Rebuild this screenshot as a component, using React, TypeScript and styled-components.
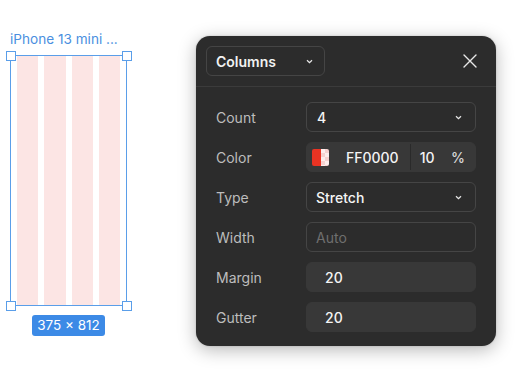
import React from "react";
import styled, { createGlobalStyle } from "styled-components";

const Global = createGlobalStyle`
  html, body { margin: 0; padding: 0; background: #ffffff; }
  body { font-family: Inter, "Noto Sans", sans-serif; -webkit-font-smoothing: antialiased; }
  * { box-sizing: border-box; }
`;

const Page = styled.div`
  width: 515px;
  height: 386px;
  display: flex;
  align-items: flex-start;
  overflow: hidden;
`;

const Canvas = styled.div`
  display: flex;
  flex-direction: column;
  align-items: flex-start;
  padding: 30px 0 0 10px;
  width: 196px;
  flex-shrink: 0;
`;

const FrameLabel = styled.div`
  font-size: 13.6px;
  color: #4a8fe0;
  line-height: 18px;
  margin-bottom: 7px;
  white-space: nowrap;
`;

const Frame = styled.div`
  position: relative;
  width: 117px;
  height: 251px;
  border: 1.5px solid #5a9ee9;
  display: flex;
  justify-content: space-between;
  padding: 0 6px;
  gap: 6px;
`;

const ColumnStripe = styled.div`
  flex: 1;
  background: #fce5e4;
`;

const Handle = styled.div<{ $x: "left" | "right"; $y: "top" | "bottom" }>`
  position: absolute;
  width: 10px;
  height: 10px;
  background: #ffffff;
  border: 1.5px solid #5a9ee9;
  ${(p) => (p.$x === "left" ? "left: -5.5px;" : "right: -5.5px;")}
  ${(p) => (p.$y === "top" ? "top: -5.5px;" : "bottom: -5.5px;")}
`;

const SizeBadge = styled.div`
  margin: 9px 0 0 22px;
  width: 73px;
  height: 21px;
  border-radius: 3px;
  background: #3c8ae6;
  color: #ffffff;
  font-size: 13.5px;
  line-height: 21px;
  text-align: center;
`;

const Panel = styled.div`
  margin-top: 36px;
  width: 300px;
  height: 310px;
  flex-shrink: 0;
  background: #2c2c2c;
  border-radius: 14px;
  box-shadow: 0 4px 18px rgba(0, 0, 0, 0.28), 0 0 2px rgba(0, 0, 0, 0.2);
  display: flex;
  flex-direction: column;
`;

const Header = styled.div`
  height: 51px;
  padding: 10px;
  border-bottom: 1px solid #3b3b3b;
  display: flex;
  align-items: flex-start;
  justify-content: space-between;
`;

const Dropdown = styled.div`
  width: 119px;
  height: 30px;
  border: 1px solid #454545;
  border-radius: 6px;
  display: flex;
  align-items: center;
  justify-content: space-between;
  padding: 0 11px 0 9px;
  color: #f2f2f2;
  font-size: 14px;
  font-weight: 600;
`;

const CloseButton = styled.div`
  width: 30px;
  height: 30px;
  display: flex;
  align-items: center;
  justify-content: center;
  margin-right: 1px;
`;

const Body = styled.div`
  display: flex;
  flex-direction: column;
  gap: 10px;
  padding: 15px 20px 14px 20px;
`;

const Row = styled.div`
  display: flex;
  align-items: center;
  height: 30px;
`;

const Label = styled.div`
  width: 90px;
  font-size: 14px;
  color: #bdbdbd;
`;

const Field = styled.div<{ $filled?: boolean }>`
  flex: 1;
  height: 30px;
  border-radius: 6px;
  display: flex;
  align-items: center;
  justify-content: space-between;
  font-size: 14px;
  font-weight: 500;
  color: #f4f4f4;
  ${(p) =>
    p.$filled
      ? "background: #383838; border: 1px solid #383838;"
      : "border: 1px solid #454545;"}
`;

const FieldText = styled.span<{ $pad: number; $muted?: boolean }>`
  padding-left: ${(p) => p.$pad}px;
  ${(p) => (p.$muted ? "color: #6f6f6f; font-weight: 400;" : "")}
`;

const Chevron = styled.span`
  display: flex;
  padding-right: 13px;
`;

const ColorPart = styled.div`
  display: flex;
  align-items: center;
  height: 100%;
`;

const Swatch = styled.div`
  width: 17px;
  height: 17px;
  margin-left: 5px;
  border-radius: 2px;
  overflow: hidden;
  display: flex;
`;

const SwatchSolid = styled.div`
  width: 9px;
  background: #ea3323;
`;

const SwatchAlpha = styled.div`
  flex: 1;
  background: repeating-conic-gradient(#f6d2d0 0% 25%, #fdeeed 0% 50%) 0 0 / 8px 8px;
`;

const HexText = styled.span`
  margin-left: 17px;
`;

const Divider = styled.div`
  width: 1px;
  height: 26px;
  background: #2a2a2a;
  margin-left: 11px;
`;

const OpacityText = styled.span`
  margin-left: 9px;
`;

const Percent = styled.span`
  padding-right: 10px;
  color: #d8d8d8;
`;

const ChevronIcon = () => (
  <svg width="7" height="5" viewBox="0 0 7 5">
    <path d="M1 1.2 L3.5 3.6 L6 1.2" fill="none" stroke="#e6e6e6" strokeWidth="1.3" />
  </svg>
);

const CloseIcon = () => (
  <svg width="14" height="14" viewBox="0 0 14 14">
    <path d="M1 1 L13 13 M13 1 L1 13" stroke="#e8e8e8" strokeWidth="1.4" strokeLinecap="round" />
  </svg>
);

export default function App() {
  return (
    <Page>
      <Global />
      <Canvas>
        <FrameLabel>iPhone 13 mini ...</FrameLabel>
        <Frame>
          {[0, 1, 2, 3].map((i) => (
            <ColumnStripe key={i} />
          ))}
          <Handle $x="left" $y="top" />
          <Handle $x="right" $y="top" />
          <Handle $x="left" $y="bottom" />
          <Handle $x="right" $y="bottom" />
        </Frame>
        <SizeBadge>375 × 812</SizeBadge>
      </Canvas>
      <Panel>
        <Header>
          <Dropdown>
            <span>Columns</span>
            <ChevronIcon />
          </Dropdown>
          <CloseButton>
            <CloseIcon />
          </CloseButton>
        </Header>
        <Body>
          <Row>
            <Label>Count</Label>
            <Field>
              <FieldText $pad={10}>4</FieldText>
              <Chevron>
                <ChevronIcon />
              </Chevron>
            </Field>
          </Row>
          <Row>
            <Label>Color</Label>
            <Field $filled>
              <ColorPart>
                <Swatch>
                  <SwatchSolid />
                  <SwatchAlpha />
                </Swatch>
                <HexText>FF0000</HexText>
                <Divider />
                <OpacityText>10</OpacityText>
              </ColorPart>
              <Percent>%</Percent>
            </Field>
          </Row>
          <Row>
            <Label>Type</Label>
            <Field>
              <FieldText $pad={9}>Stretch</FieldText>
              <Chevron>
                <ChevronIcon />
              </Chevron>
            </Field>
          </Row>
          <Row>
            <Label>Width</Label>
            <Field>
              <FieldText $pad={9} $muted>
                Auto
              </FieldText>
            </Field>
          </Row>
          <Row>
            <Label>Margin</Label>
            <Field $filled>
              <FieldText $pad={18}>20</FieldText>
            </Field>
          </Row>
          <Row>
            <Label>Gutter</Label>
            <Field $filled>
              <FieldText $pad={18}>20</FieldText>
            </Field>
          </Row>
        </Body>
      </Panel>
    </Page>
  );
}
